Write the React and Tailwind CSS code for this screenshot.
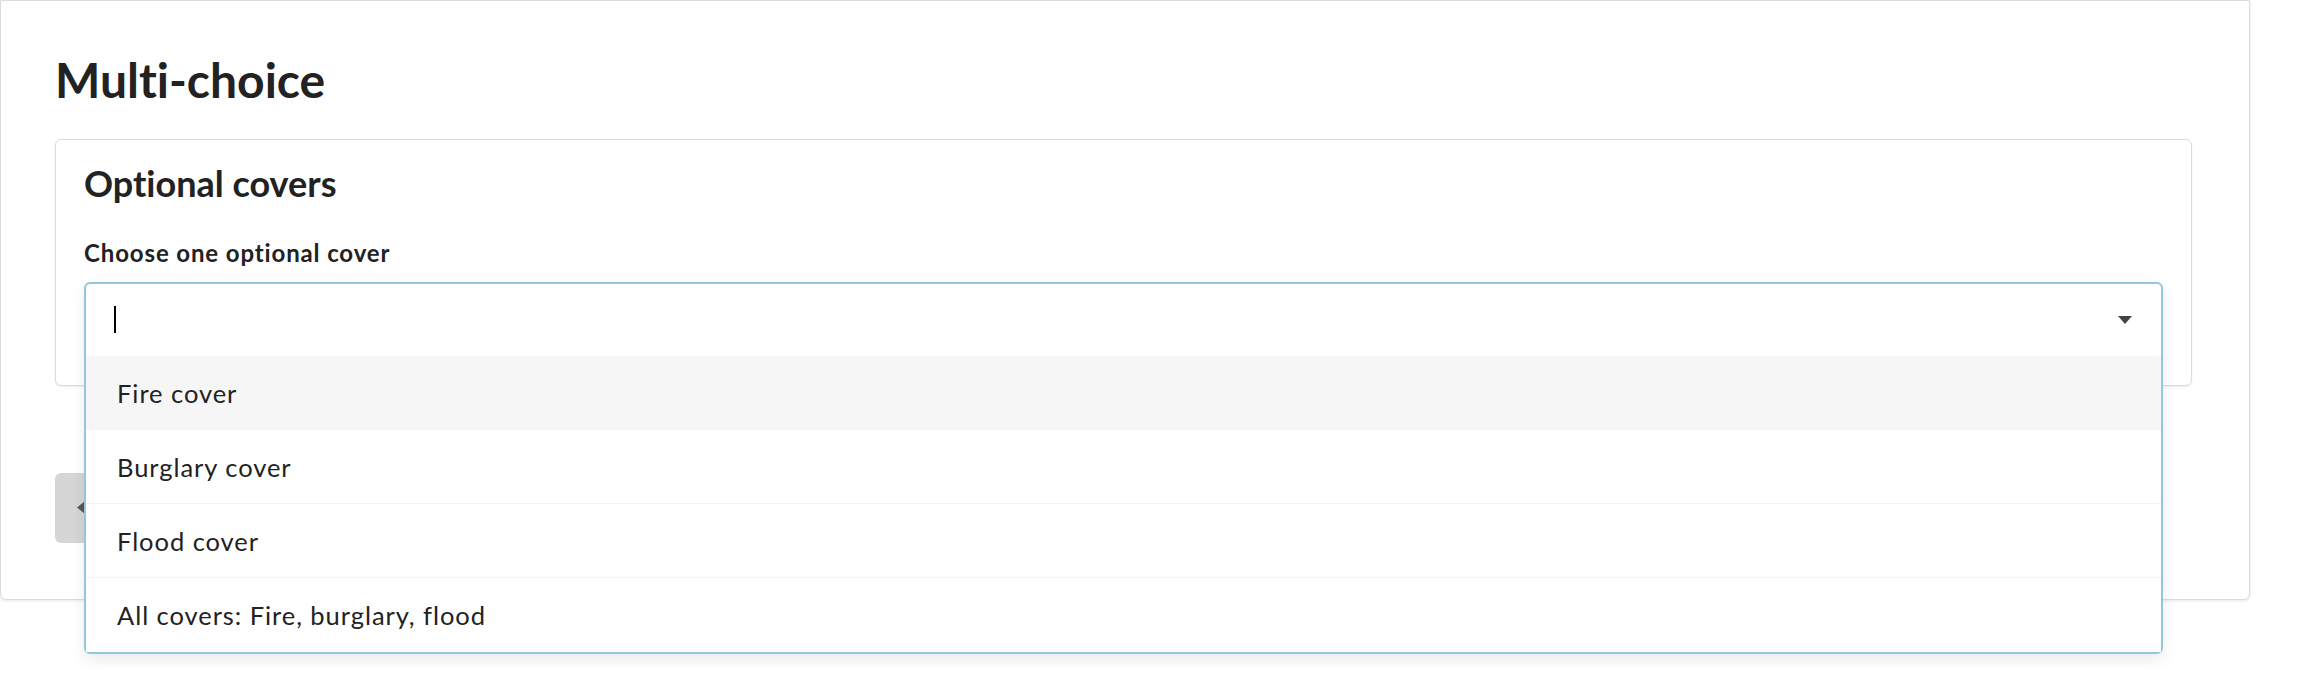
import React, { useState } from "react";

const options = [
  "Fire cover",
  "Burglary cover",
  "Flood cover",
  "All covers: Fire, burglary, flood",
];

const MultiChoice = () => {
  const [active, setActive] = useState(0);

  return (
    <div className="min-h-screen bg-white font-['Lato',sans-serif] text-[#222] [font-variant-ligatures:none]">
      <div className="w-[2250px] rounded-b-[6px] border border-[#dcdcdc] bg-white pl-[54px] pr-[57px] pt-[50px] pb-[56px] shadow-[0_1px_3px_rgba(0,0,0,0.1)]">
        <h1 className="text-[48px] font-bold leading-[1.2]">Multi-choice</h1>

        {/* Question card */}
        <div className="mt-[30px] rounded-[6px] border border-[#dcdcdc] bg-white px-[28px] pt-[22px] pb-[29px] shadow-[0_1px_2px_rgba(0,0,0,0.08)]">
          <h2 className="text-[36px] font-bold leading-[1.2]">Optional covers</h2>
          <label className="mt-[34px] block text-[24px] font-bold leading-[1.2] tracking-[0.87px]">
            Choose one optional cover
          </label>

          <div className="relative mt-[14px] h-[74px]">
            <div className="absolute inset-x-0 top-0 z-10 rounded-[6px] border-2 border-[#96c6dc] bg-white shadow-[0_6px_14px_rgba(0,0,0,0.08)]">
              <div className="flex h-[72px] items-center justify-between pl-[28px] pr-[29px]">
                <span className="block h-[27px] w-[2px] bg-black" />
                <svg width="14" height="8" viewBox="0 0 14 8">
                  <path d="M0 0h14L7 8z" fill="#444" />
                </svg>
              </div>
              {options.map((o, i) => (
                <div
                  key={o}
                  onMouseEnter={() => setActive(i)}
                  className={`flex h-[74px] items-center pl-[31px] pt-[2px] text-[25.5px] leading-[1.2] tracking-[0.95px] ${
                    i === active ? "bg-[#f6f6f6]" : "bg-white"
                  } ${i < options.length - 1 ? "border-b border-[#f3f3f3]" : ""}`}
                >
                  {o}
                </div>
              ))}
            </div>
          </div>
        </div>

        {/* Back button, mostly hidden behind the open menu */}
        <button className="mt-[87px] flex h-[70px] w-[150px] items-center gap-3 rounded-[6px] bg-[#d5d5d5] pl-[22px] text-[24px] text-[#333]">
          <svg width="8" height="13" viewBox="0 0 8 13">
            <path d="M8 0v13L0 6.5z" fill="#555" />
          </svg>
          Back
        </button>
      </div>
    </div>
  );
};

export default function App() {
  return <MultiChoice />;
}
